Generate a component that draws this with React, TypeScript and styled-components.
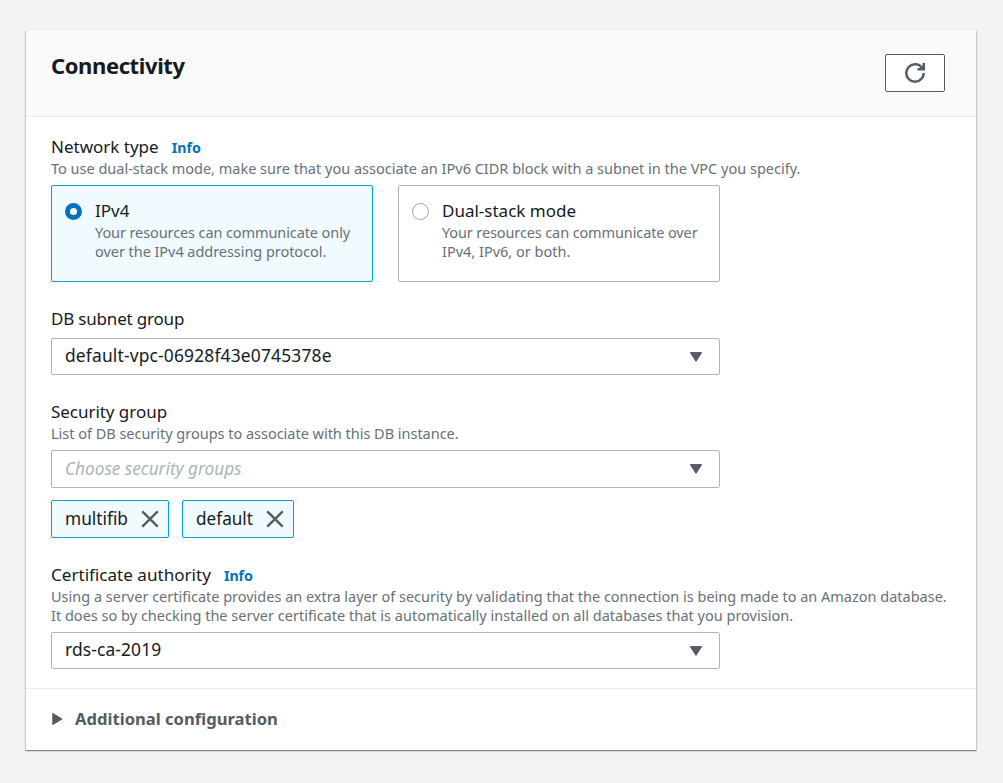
import React, { useState } from "react";
import styled, { createGlobalStyle } from "styled-components";

const GlobalStyle = createGlobalStyle`
  *, *::before, *::after { box-sizing: border-box; }
  body {
    margin: 0;
    background: #f2f3f3;
    color: #16191f;
    font-family: "Noto Sans", "Open Sans", sans-serif;
  }
  button { font: inherit; color: inherit; }
`;

type TextProps = { $size?: number; $track?: number };

const Page = styled.main`
  min-height: 783px;
  padding: 30px 27px 33px 26px;
`;

const Panel = styled.section`
  background: #fff;
  box-shadow: 0 1px 1px 0 rgba(0, 28, 36, 0.3), 1px 1px 1px 0 rgba(0, 28, 36, 0.15),
    -1px 1px 1px 0 rgba(0, 28, 36, 0.15), 0 -1px 0 0 #eaeded;
`;

const PanelHeader = styled.header`
  display: flex;
  justify-content: space-between;
  align-items: flex-start;
  height: 87px;
  padding: 24px 31px 0 25px;
  background: #fafafa;
  border-bottom: 1px solid #eaeded;
`;

const Title = styled.h2`
  margin: -4px 0 0;
  font-size: 22px;
  font-weight: 700;
  line-height: 30px;
  letter-spacing: -0.39px;
`;

const RefreshButton = styled.button`
  display: flex;
  align-items: center;
  justify-content: center;
  width: 60px;
  height: 38px;
  padding: 0;
  background: #fff;
  border: 1px solid #545b64;
  border-radius: 2px;
`;

const PanelBody = styled.div`
  display: flex;
  flex-direction: column;
  gap: 25px;
  padding: 18px 25px 19px;
`;

const Field = styled.div`
  display: flex;
  flex-direction: column;
`;

const LabelRow = styled.div`
  display: flex;
  align-items: baseline;
  gap: 13px;
  height: 24px;
`;

const Label = styled.span<TextProps>`
  font-size: ${(p) => p.$size ?? 17}px;
  letter-spacing: ${(p) => (p.$track ? `${p.$track}px` : "normal")};
  line-height: 24px;
  white-space: nowrap;
`;

const InfoLink = styled.a`
  color: #0073bb;
  font-size: 14.2px;
  font-weight: 700;
  line-height: 19px;
  text-decoration: none;
`;

const Description = styled.span<TextProps>`
  display: block;
  color: #687078;
  font-size: ${(p) => p.$size ?? 14.5}px;
  letter-spacing: ${(p) => (p.$track ? `${p.$track}px` : "normal")};
  line-height: 19px;
  white-space: nowrap;
`;

const Control = styled.div`
  width: 669px;
  margin-top: 7px;
`;

const Tiles = styled(Control)`
  display: grid;
  grid-template-columns: 1fr 1fr;
  gap: 25px;
`;

const Tile = styled.div<{ $selected: boolean }>`
  display: flex;
  gap: 13px;
  height: 97px;
  padding: 13px 13px 0;
  background: ${(p) => (p.$selected ? "#f1faff" : "#fff")};
  border: 1px solid ${(p) => (p.$selected ? "#00a1c9" : "#aab7b8")};
  border-radius: 2px;
  cursor: pointer;
`;

const Radio = styled.span<{ $selected: boolean }>`
  flex: none;
  width: 17px;
  height: 17px;
  margin-top: 4px;
  background: #fff;
  border: ${(p) => (p.$selected ? "5px solid #0073bb" : "1px solid #96a5a6")};
  border-radius: 50%;
`;

const TileText = styled.div`
  display: flex;
  flex-direction: column;
`;

const SelectBox = styled(Control)<{ $tall?: boolean }>`
  display: flex;
  align-items: flex-start;
  justify-content: space-between;
  height: ${(p) => (p.$tall ? 38 : 37)}px;
  padding: ${(p) => (p.$tall ? 6 : 4)}px 16px 0 13px;
  border: 1px solid #aab7b8;
  border-radius: 2px;

  > svg {
    margin-top: ${(p) => (p.$tall ? 6 : 8)}px;
  }
`;

const Value = styled(Label)`
  height: 24px;
`;

const Placeholder = styled(Value)`
  color: #aab7b8;
  font-style: italic;
`;

const Tokens = styled.div`
  display: flex;
  gap: 13px;
  margin-top: 12px;
`;

const Token = styled.div<{ $width: number }>`
  display: flex;
  align-items: center;
  justify-content: space-between;
  width: ${(p) => p.$width}px;
  height: 38px;
  padding: 0 9px 1px 13px;
  background: #f1faff;
  border: 1px solid #00a1c9;
  border-radius: 2px;
`;

const DismissButton = styled.button`
  display: flex;
  margin-top: 1px;
  padding: 0;
  background: none;
  border: 0;
`;

const Expander = styled.button`
  display: flex;
  align-items: center;
  gap: 12px;
  width: 100%;
  height: 62px;
  padding: 0 26px 2px;
  background: none;
  border: 0;
  border-top: 1px solid #eaeded;
  color: #545b64;
  font-size: 16.62px;
  font-weight: 700;
  line-height: 24px;
`;

const CaretDown = () => (
  <svg width="14" height="12" viewBox="0 0 14 12" fill="#545b64" stroke="#545b64" strokeLinejoin="round">
    <path d="M1.3 1.6h11.4L7 10.4z" />
  </svg>
);

const CaretRight = () => (
  <svg width="11" height="14" viewBox="0 0 11 14" fill="#545b64" stroke="#545b64" strokeLinejoin="round">
    <path d="M.8 1.4v11.2L10 7z" />
  </svg>
);

const RefreshIcon = () => (
  <svg width="20" height="20" viewBox="0 0 16 16" fill="none" stroke="#545b64" strokeWidth="2">
    <path d="M15 8c0 3.87-3.13 7-7 7s-7-3.13-7-7 3.13-7 7-7c2.79 0 5.2 1.63 6.33 4" />
    <path d="M10 5h5V0" />
    <path d="M12 5l3-3v3z" fill="#545b64" stroke="none" />
  </svg>
);

const CloseIcon = () => (
  <svg width="18" height="18" viewBox="0 0 18 18" stroke="#545b64" strokeWidth="2.4">
    <path d="M1.3 1.3l15.4 15.4M16.7 1.3L1.3 16.7" />
  </svg>
);

type TileLine = { text: string; track?: number };
const networkTypes: { title: string; track?: number; lines: TileLine[] }[] = [
  {
    title: "IPv4",
    lines: [
      { text: "Your resources can communicate only", track: -0.1 },
      { text: "over the IPv4 addressing protocol.", track: -0.05 },
    ],
  },
  {
    title: "Dual-stack mode",
    lines: [
      { text: "Your resources can communicate over", track: -0.12 },
      { text: "IPv4, IPv6, or both." },
    ],
  },
];

const groups = [
  { name: "multifib", size: 17.27, width: 118 },
  { name: "default", size: 17.16, width: 112 },
];

export default function App() {
  const [selected, setSelected] = useState(0);
  return (
    <Page>
      <GlobalStyle />
      <Panel>
        <PanelHeader>
          <Title>Connectivity</Title>
          <RefreshButton aria-label="Refresh">
            <RefreshIcon />
          </RefreshButton>
        </PanelHeader>
        <PanelBody>
          <Field>
            <LabelRow>
              <Label>Network type</Label>
              <InfoLink>Info</InfoLink>
            </LabelRow>
            <Description>
              To use dual-stack mode, make sure that you associate an IPv6 CIDR block with a subnet in the VPC you specify.
            </Description>
            <Tiles>
              {networkTypes.map((type, i) => (
                <Tile key={type.title} $selected={i === selected} onClick={() => setSelected(i)}>
                  <Radio $selected={i === selected} />
                  <TileText>
                    <Label $track={type.track}>{type.title}</Label>
                    {type.lines.map((line) => (
                      <Description key={line.text} $track={line.track}>
                        {line.text}
                      </Description>
                    ))}
                  </TileText>
                </Tile>
              ))}
            </Tiles>
          </Field>
          <Field>
            <LabelRow>
              <Label $track={-0.19}>DB subnet group</Label>
            </LabelRow>
            <SelectBox>
              <Value $size={17.4} $track={0.17}>default-vpc-06928f43e0745378e</Value>
              <CaretDown />
            </SelectBox>
          </Field>
          <Field>
            <LabelRow>
              <Label $track={-0.04}>Security group</Label>
            </LabelRow>
            <Description $track={-0.02}>List of DB security groups to associate with this DB instance.</Description>
            <SelectBox $tall>
              <Placeholder $size={17.2}>Choose security groups</Placeholder>
              <CaretDown />
            </SelectBox>
            <Tokens>
              {groups.map((group) => (
                <Token key={group.name} $width={group.width}>
                  <Value $size={group.size}>{group.name}</Value>
                  <DismissButton aria-label={`Remove ${group.name}`}>
                    <CloseIcon />
                  </DismissButton>
                </Token>
              ))}
            </Tokens>
          </Field>
          <Field>
            <LabelRow>
              <Label $size={17.09}>Certificate authority</Label>
              <InfoLink>Info</InfoLink>
            </LabelRow>
            <Description $size={14.49}>
              Using a server certificate provides an extra layer of security by validating that the connection is being made to an Amazon database.
            </Description>
            <Description $size={14.53}>
              It does so by checking the server certificate that is automatically installed on all databases that you provision.
            </Description>
            <SelectBox>
              <Value $size={17.4} $track={0.12}>rds-ca-2019</Value>
              <CaretDown />
            </SelectBox>
          </Field>
        </PanelBody>
        <Expander>
          <CaretRight />
          Additional configuration
        </Expander>
      </Panel>
    </Page>
  );
}
